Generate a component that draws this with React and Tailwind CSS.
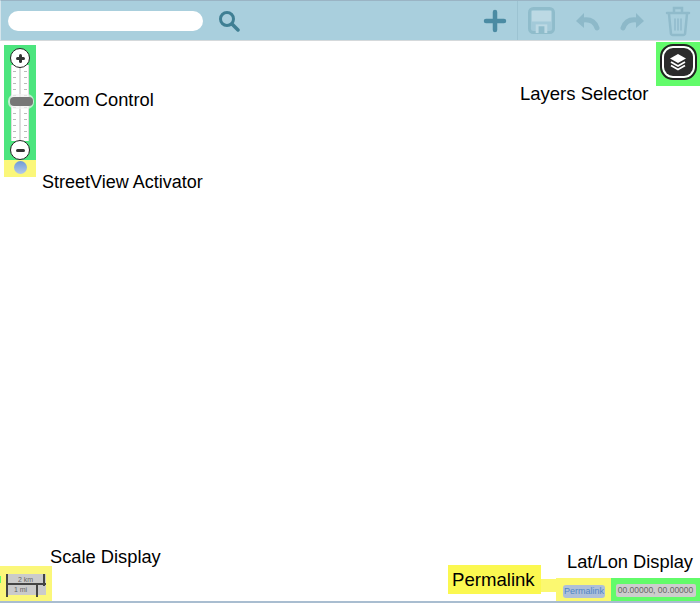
const TICKS = [0, 1, 2, 3, 4, 5, 6, 7, 8, 9, 10, 11, 12];

function SearchIcon() {
  return (
    <svg width="22" height="22" viewBox="0 0 22 22" fill="none" stroke="#3f7f93">
      <circle cx="9" cy="9" r="6.5" strokeWidth="3" />
      <path d="M14 14l6 6" strokeWidth="3.5" strokeLinecap="round" />
    </svg>
  );
}

function PlusIcon() {
  return (
    <svg width="24" height="24" viewBox="0 0 24 24" fill="none" stroke="#4b8ba3" strokeWidth="4.5" strokeLinecap="round">
      <path d="M12 3v18M3 12h18" />
    </svg>
  );
}

function SaveIcon() {
  return (
    <svg width="27" height="27" viewBox="0 0 28 28" fill="none">
      <rect x="1.5" y="1.5" width="25" height="25" rx="4" fill="#a3cad9" stroke="#8fbccb" strokeWidth="3" />
      <rect x="4" y="4" width="20" height="11" fill="#bcd9e4" />
      <rect x="8" y="18" width="12" height="9" fill="#bcd9e4" />
      <rect x="11" y="20" width="6" height="7" fill="#8fbccb" />
    </svg>
  );
}

function UndoIcon() {
  return (
    <svg width="25" height="20" viewBox="0 0 25 20" fill="none">
      <path d="M1 10l8-8v15z" fill="#8db9c9" />
      <path d="M8 9c7-1 12 2 14 8" stroke="#8db9c9" strokeWidth="5" strokeLinecap="round" />
    </svg>
  );
}

function RedoIcon() {
  return (
    <svg width="25" height="20" viewBox="0 0 25 20" fill="none">
      <path d="M24 10l-8-8v15z" fill="#8db9c9" />
      <path d="M17 9c-7-1-12 2-14 8" stroke="#8db9c9" strokeWidth="5" strokeLinecap="round" />
    </svg>
  );
}

function TrashIcon() {
  return (
    <svg width="26" height="32" viewBox="0 0 26 32" fill="none" stroke="#90bbcb" strokeWidth="2.5" strokeLinecap="round">
      <path d="M2 8h22M9 7V3h8v4" />
      <path d="M4 9l2 20a2 2 0 0 0 2 1h10a2 2 0 0 0 2-1l2-20" />
      <path d="M10 14v11M13 14v11M16 14v11" strokeWidth="1.5" />
    </svg>
  );
}

function LayersButton() {
  return (
    <div className="w-[44px] h-[44px] mt-[1px] bg-[#62fb6a] flex items-center justify-center pb-[4px]">
      <div className="w-[29px] h-[28px] rounded-[9px] bg-[#2b2b2b] ring-2 ring-white outline-2 outline-offset-2 outline-[#222] flex items-center justify-center">
        <svg width="20" height="20" viewBox="0 0 20 20">
          <path d="M10 2l8 4.5-8 4.5-8-4.5z" fill="#fff" />
          <path d="M3 10l7 4 7-4M3 13.5l7 4 7-4" fill="none" stroke="#fff" strokeWidth="1.8" />
        </svg>
      </div>
    </div>
  );
}

function ZoomButton({ sign }) {
  return (
    <div className="w-[20px] h-[20px] rounded-full bg-white border-[1.5px] border-[#222] flex items-center justify-center shrink-0 z-10">
      <div className="relative w-[9px] h-[9px] flex items-center justify-center">
        <div className="w-[9px] h-[3px] bg-[#333] rounded-sm" />
        {sign === "plus" && <div className="absolute w-[3px] h-[9px] bg-[#333] rounded-sm" />}
      </div>
    </div>
  );
}

function ZoomControl() {
  return (
    <div className="w-[32px] h-[115px] bg-[#4ce57e] flex flex-col items-center pt-[3px]">
      <ZoomButton sign="plus" />
      <div className="relative w-[18px] flex-1 -mt-[3px] -mb-[1px] bg-white border-x border-[#ddd] flex justify-center">
        <div className="w-[2px] h-full border-x border-[#ddd]" />
        <div className="absolute inset-x-[1px] top-[6px] flex flex-col gap-[5px]">
          {TICKS.map((t) => (
            <div key={t} className="h-px w-[3px] bg-[#bbb]" />
          ))}
        </div>
        <div className="absolute inset-x-[1px] top-[6px] flex flex-col gap-[5px] items-end">
          {TICKS.map((t) => (
            <div key={t} className="h-px w-[3px] bg-[#bbb]" />
          ))}
        </div>
        <div className="absolute -left-[4px] top-[29px] w-[26px] h-[15px] rounded-[7px] bg-[#f2f2f2]/70 flex items-center justify-center">
          <div className="w-[23px] h-[9px] rounded-[4px] bg-[#777]" />
        </div>
      </div>
      <ZoomButton sign="minus" />
    </div>
  );
}

function ScaleBar() {
  return (
    <div className="relative w-[40px] h-[21px] bg-[#cbcbcb] text-[7px] text-[#666] text-center">
      <div className="h-[11px] leading-[11px] border-b-2 border-[#444]">2 km</div>
      <div className="w-[30px] leading-[10px]">1 mi</div>
      <div className="absolute left-0 top-0 w-[2px] h-[23px] bg-[#444]" />
      <div className="absolute right-[1px] top-0 w-[2px] h-[12px] bg-[#444]" />
      <div className="absolute left-[30px] top-[11px] w-[2px] h-[12px] bg-[#444]" />
    </div>
  );
}

export default function App() {
  return (
    <div className="w-[700px] h-[603px] flex flex-col bg-white font-['Liberation_Sans',Arial,sans-serif] overflow-hidden">
      {/* Toolbar */}
      <div className="h-[41px] shrink-0 bg-[#a9cfdd] border-t border-t-[#9ab4c4] border-b border-b-[#d5d9db] border-l border-l-[#d5e5ec] flex items-center pl-[7px]">
        <div className="w-[195px] h-[20px] rounded-[10px] bg-white" />
        <div className="ml-[15px]">
          <SearchIcon />
        </div>
        <div className="flex-1" />
        <div className="mr-[10px]">
          <PlusIcon />
        </div>
        <div className="w-px h-full bg-[#9cc3d2]" />
        <div className="flex items-center justify-center w-[47px]">
          <SaveIcon />
        </div>
        <div className="flex items-center justify-center w-[44px]">
          <UndoIcon />
        </div>
        <div className="flex items-center justify-center w-[47px]">
          <RedoIcon />
        </div>
        <div className="flex items-center justify-center w-[44px]">
          <TrashIcon />
        </div>
      </div>

      {/* Map area */}
      <div className="relative flex-1 border-b-2 border-b-[#a9bdd0] text-[18.3px] text-black">
        <div className="absolute left-[4px] top-[4px] flex flex-col">
          <ZoomControl />
          <div className="w-[32px] h-[17px] bg-[#fbf77a] flex justify-center pt-[1px]">
            <div className="w-[13px] h-[13px] rounded-full bg-gradient-to-b from-[#6f9ad6] to-[#b5cbe8]" />
          </div>
        </div>
        <span className="absolute left-[43px] top-[45px]">Zoom Control</span>
        <span className="absolute left-[42px] top-[128px] text-[18px]">StreetView Activator</span>

        <div className="absolute right-0 top-0">
          <LayersButton />
        </div>
        <span className="absolute left-[520px] top-[39px] text-[18.5px]">Layers Selector</span>

        <span className="absolute left-[50px] top-[502px]">Scale Display</span>
        <div className="absolute left-0 bottom-0 w-[52px] h-[35px] bg-[#fbf77a] flex items-center justify-center pt-[2px] pr-[1px]">
          <ScaleBar />
        </div>
        <div className="absolute left-0 bottom-[18px] w-[1px] h-[7px] bg-[#62fb6a]" />

        <span className="absolute left-[567px] top-[507px]">Lat/Lon Display</span>
        <div className="absolute left-[448px] top-[524px] w-[93px] h-[29px] bg-[#fbf850] text-[18.6px] flex items-center pl-[4px]">
          Permalink
        </div>
        <div className="absolute left-[541px] top-[538px] w-[16px] h-[13px] bg-[#fbf870]" />
        <div className="absolute bottom-0 left-[556px] w-[55px] h-[23px] bg-[#fbf870] flex items-end justify-center pb-[3px] pl-[1px]">
          <div className="w-[42px] h-[13px] leading-[13px] rounded-[3px] bg-[#aebfd9] text-[9px] text-[#4f86c6] text-center">Permalink</div>
        </div>
        <div className="absolute bottom-0 right-0 w-[89px] h-[23px] bg-[#62fb6a] flex items-end justify-center pb-[4px]">
          <div className="w-[80px] h-[13px] leading-[13px] rounded-[2px] bg-[#cdcdcd] text-[8.5px] text-[#666] text-center">00.00000, 00.00000</div>
        </div>
      </div>
    </div>
  );
}
